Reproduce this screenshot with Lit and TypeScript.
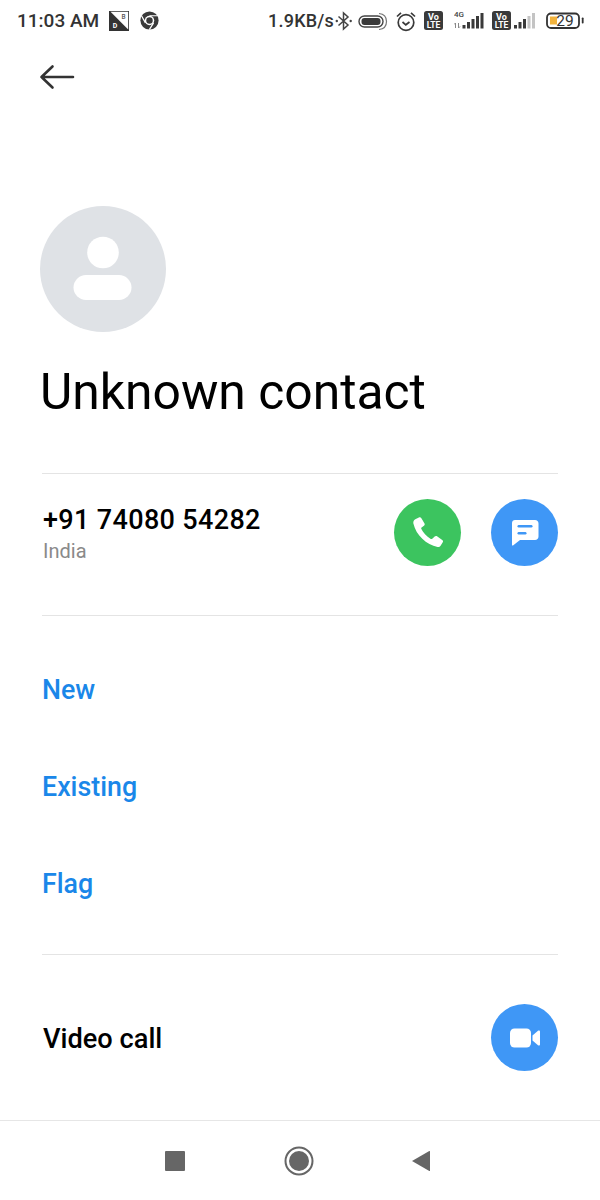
import { LitElement, html, css } from "lit";
import { customElement } from "lit/decorators.js";

@customElement("app-root")
export class AppRoot extends LitElement {
  static styles = css`
    :host { display: block; width: 600px; height: 1200px; background: #fff; font-family: Roboto, "Noto Sans", sans-serif; overflow: hidden; color: #000; }
    .page { height: 1200px; display: flex; flex-direction: column; }
    .status { height: 40px; flex: none; display: flex; align-items: center; justify-content: space-between; padding: 1px 16px 0 17px; box-sizing: border-box; color: #333; font-size: 19px; font-weight: 500; }
    .st-left, .st-right { display: flex; align-items: center; }
    .st-left svg.db { margin-left: 10px; }
    .st-left svg.ch { margin-left: 11px; }
    .speed { font-size: 18px; letter-spacing: 0.2px; }
    .st-right svg { display: block; flex: none; }
    .ml1 { margin-left: 1px; }
    .ml2 { margin-left: 2px; }
    .ml5 { margin-left: 5px; }
    .ml7 { margin-left: 7px; }
    .ml8 { margin-left: 8px; }
    .ml10 { margin-left: 10px; }
    .ml11 { margin-left: 11px; }
    .backrow { height: 74px; flex: none; padding: 23px 0 0 38px; box-sizing: border-box; }
    .backrow svg { display: block; }
    .avatar-wrap { padding: 92px 0 0 40px; flex: none; }
    .avatar { width: 126px; height: 126px; display: block; }
    h1 { margin: 29px 0 0 40px; font-size: 49.8px; line-height: 62px; font-weight: 400; color: #000; height: 62px; }
    .content { margin: 0 42px; }
    hr { border: 0; height: 1px; background: #e4e4e4; margin: 0; }
    .first { margin-top: 50px; }
    .phone-row { height: 141px; display: flex; align-items: flex-start; justify-content: space-between; box-sizing: border-box; padding: 25px 0 0 1px; }
    .num { font-size: 27px; font-weight: 500; line-height: 42px; letter-spacing: 0.35px; }
    .region { font-size: 20px; line-height: 20px; color: #8a8a8a; }
    .btns { display: flex; gap: 30px; }
    .circle { width: 67px; height: 67px; border-radius: 50%; display: flex; align-items: center; justify-content: center; flex: none; }
    .green { background: #3cc45f; }
    .blue { background: #3f97f6; }
    .links { height: 338px; box-sizing: border-box; padding: 26px 0 0 0; display: flex; flex-direction: column; }
    .link { height: 97px; line-height: 97px; color: #1a87e9; font-size: 26.8px; font-weight: 500; flex: none; }
    .video-row { height: 165px; display: flex; align-items: center; justify-content: space-between; box-sizing: border-box; padding-left: 1px; }
    .video-row span { font-size: 27.2px; font-weight: 500; padding-top: 2px; }
    .nav { flex: 1; border-top: 1px solid #e6e6e6; display: flex; align-items: center; padding-left: 165px; box-sizing: border-box; }
    .nav svg { display: block; flex: none; }
    .nav .home { margin-left: 99px; }
    .nav .backtri { margin-left: 97px; }
  `;

  private volte() {
    return html`<svg width="19" height="19" viewBox="0 0 19 19">
      <rect width="19" height="19" rx="2.5" fill="#3a3a3a"/>
      <text x="9.5" y="8.5" font-size="9" font-family="Roboto" font-weight="700" text-anchor="middle" fill="#fff">Vo</text>
      <text x="9.5" y="17" font-size="8.5" font-family="Roboto" font-weight="700" text-anchor="middle" fill="#fff">LTE</text>
    </svg>`;
  }

  render() {
    return html`<div class="page">
      <div class="status">
        <div class="st-left">
          <span>11:03 AM</span>
          <svg class="db" width="20" height="20" viewBox="0 0 20 20">
            <rect x="0" y="0" width="20" height="20" fill="#333"/>
            <path d="M1.5 0.8H19.2V18.5Z" fill="#fff"/>
            <text x="14.5" y="7.5" font-size="6.5" font-family="Roboto" font-weight="500" text-anchor="middle" fill="#555">B</text>
            <text x="6" y="16.5" font-size="7" font-family="Roboto" font-weight="700" text-anchor="middle" fill="#fff">D</text>
          </svg>
          <svg class="ch" width="19" height="19" viewBox="0 0 20 20">
            <circle cx="10" cy="10" r="9.6" fill="#3a3a3a"/>
            <circle cx="10" cy="10" r="5" fill="#fff"/>
            <circle cx="10" cy="10" r="3.4" fill="#3a3a3a"/>
            <path d="M10 5H18.6M5.7 12.5L1.6 5M14.3 12.5L9.8 19.6" stroke="#fff" stroke-width="1.3" fill="none"/>
          </svg>
        </div>
        <div class="st-right">
          <span class="speed">1.9KB/s</span>
          <svg class="ml1" width="18" height="20" viewBox="0 0 18 20" fill="none" stroke="#444" stroke-width="1.5">
            <path d="M3.5 5.5L13 14L8.5 18V2L13 6L3.5 14.5"/>
            <circle cx="1.8" cy="10" r="1.2" fill="#444" stroke="none"/><circle cx="15.7" cy="10" r="1.2" fill="#444" stroke="none"/>
          </svg>
          <svg class="ml5" width="30" height="20" viewBox="0 0 30 20" fill="none">
            <rect x="1" y="5" width="24" height="11" rx="5.5" stroke="#444" stroke-width="1.4"/>
            <rect x="3.5" y="7" width="19" height="7" rx="3" fill="#3a3a3a"/>
            <path d="M21 2.5C26 3 28.5 6.5 28.5 10.5C28.500 14.500 26 18 21 18.500" stroke="#777" stroke-width="1.200"/>
          </svg>
          <svg class="ml7" width="22" height="22" viewBox="0 0 22 22" fill="none" stroke="#3a3a3a" stroke-width="1.7">
            <circle cx="11" cy="12.5" r="7.8"/>
            <path d="M7.5 12L10.800 14.800L14.500 12"/>
            <path d="M2 6.5L6 2.800M20 6.500L16 2.800"/>
          </svg>
          <span class="ml7">${this.volte()}</span>
          <svg class="ml11" width="30" height="22" viewBox="0 0 30 22">
            <text x="0" y="6.500" font-size="8" font-family="Roboto" font-weight="500" fill="#444">4G</text>
            <path d="M1.500 18V13M0 14.500L1.500 13M4.500 13V18M4.500 18L6 16.500" stroke="#888" stroke-width="1" fill="none"/>
            <g fill="#3a3a3a"><rect x="8.500" y="15" width="3" height="3.500"/><rect x="13" y="12" width="3" height="6.500"/><rect x="17.500" y="9" width="3" height="9.500"/><rect x="22" y="6" width="3" height="12.500"/><rect x="26.500" y="3" width="3" height="15.500"/></g>
          </svg>
          <span class="ml8">${this.volte()}</span>
          <svg class="ml2" width="23" height="22" viewBox="0 0 23 22">
            <g fill="#3a3a3a"><rect x="1" y="15" width="3" height="3.500"/><rect x="5.500" y="12" width="3" height="6.500"/><rect x="10" y="9" width="3" height="9.500"/></g>
            <g fill="#c4c4c4"><rect x="14.500" y="6" width="3" height="12.500"/><rect x="19" y="3" width="3" height="15.500"/></g>
          </svg>
          <svg class="ml10" width="38" height="20" viewBox="0 0 38 20" fill="none">
            <rect x="1" y="2.500" width="32" height="14.500" rx="4" stroke="#333" stroke-width="1.800"/>
            <rect x="4" y="5.500" width="7" height="8" fill="#f2b33c"/>
            <rect x="35.800" y="6.500" width="1.800" height="6" rx=".8" fill="#333"/>
            <text x="19" y="15" font-size="15.500" font-family="Roboto" font-weight="400" text-anchor="middle" fill="#333">29</text>
          </svg>
        </div>
      </div>

      <div class="backrow">
        <svg width="38" height="28" viewBox="0 0 38 28" fill="none" stroke="#333" stroke-width="2.600" stroke-linecap="round" stroke-linejoin="round">
          <path d="M3.500 14H35M14.500 3.500L3.500 14L14.500 24.500"/>
        </svg>
      </div>

      <div class="avatar-wrap">
        <svg class="avatar" viewBox="0 0 126 126">
          <circle cx="63" cy="63" r="63" fill="#dfe2e6"/>
          <circle cx="63" cy="46.500" r="15.800" fill="#fff"/>
          <rect x="33.500" y="69" width="58" height="25" rx="12.500" fill="#fff"/>
        </svg>
      </div>

      <h1>Unknown contact</h1>

      <div class="content">
        <hr class="first"/>
        <div class="phone-row">
          <div>
            <div class="num">+91 74080 54282</div>
            <div class="region">India</div>
          </div>
          <div class="btns">
            <div class="circle green">
              <svg width="34" height="34" viewBox="0 0 34 34">
                <path transform="translate(-2.700 0) scale(1.080 1)" fill="#fff" d="M6.500 3.200L9.800 1.500C10.700 1 11.600 1.300 12.100 2.200L15 7.600C15.400 8.400 15.200 9.300 14.500 9.800L12.300 11.500C11.900 11.800 11.800 12.300 12 12.800C13.600 16.600 16.800 20.600 20.800 22.900C21.300 23.200 21.800 23.100 22.200 22.700L24.400 20.500C25 19.900 25.900 19.800 26.600 20.300L31.400 23.900C32.200 24.500 32.400 25.400 31.900 26.200L29.900 29.700C29.300 30.700 28.200 31.200 27.100 30.900C16.800 28.400 7.300 19.400 4.700 7.400C4.400 5.800 5 4 6.500 3.200Z"/>
              </svg>
            </div>
            <div class="circle blue">
              <svg width="30" height="30" viewBox="0 0 30 30">
                <path fill="#fff" d="M5 2H25C27 2 28.500 3.500 28.500 5.500V18.500C28.500 20.500 27 22 25 22H10L3 27.500C2.500 27.800 2 27.500 2 27V5C2 3.300 3.300 2 5 2Z"/>
                <rect x="7.500" y="7" width="15" height="2.400" rx="1.200" fill="#3f97f6"/>
                <rect x="7.500" y="14" width="9" height="2.400" rx="1.200" fill="#3f97f6"/>
              </svg>
            </div>
          </div>
        </div>
        <hr/>
        <div class="links">
          <div class="link">New</div>
          <div class="link">Existing</div>
          <div class="link">Flag</div>
        </div>
        <hr/>
        <div class="video-row">
          <span>Video call</span>
          <div class="circle blue">
            <svg width="32" height="24" viewBox="0 0 32 24">
              <rect x="1" y="2.500" width="21" height="19" rx="4.500" fill="#fff"/>
              <path fill="#fff" d="M23.500 9.500L29 4.800C30 4 31 4.500 31 5.800V18.200C31 19.500 30 20 29 19.200L23.500 14.500Z"/>
            </svg>
          </div>
        </div>
      </div>

      <div class="nav">
        <svg width="20" height="20" viewBox="0 0 20 20"><rect width="20" height="20" rx="1" fill="#666"/></svg>
        <svg class="home" width="30" height="30" viewBox="0 0 30 30"><circle cx="15" cy="15" r="13.500" fill="none" stroke="#666" stroke-width="2"/><circle cx="15" cy="15" r="10" fill="#666"/></svg>
        <svg class="backtri" width="20" height="22" viewBox="0 0 20 22"><path d="M1 11L18.300 1C18.800 .8 19 1 19 1.500V20.500C19 21 18.800 21.200 18.300 21Z" fill="#666"/></svg>
      </div>
    </div>`;
  }
}
